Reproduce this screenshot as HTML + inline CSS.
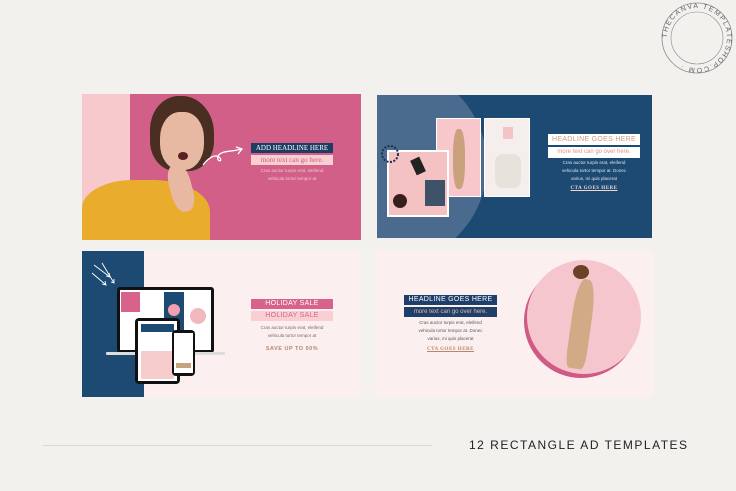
<!DOCTYPE html>
<html><head><meta charset="utf-8"><style>
*{margin:0;padding:0;box-sizing:border-box}
body{width:736px;height:491px;background:#f3f1ee;position:relative;overflow:hidden;font-family:"Liberation Sans",sans-serif}
.a{position:absolute}
.c{text-align:center;white-space:nowrap}
.s{font-size:4.5px;line-height:8px}
</style></head><body>

<svg class="a" style="left:655px;top:0" width="81" height="80" viewBox="0 0 81 80">
<circle cx="42" cy="38" r="35" fill="none" stroke="#8a8a8a" stroke-width="0.8"/>
<circle cx="42" cy="38" r="26" fill="none" stroke="#8a8a8a" stroke-width="0.6"/>
<defs><path id="cp" d="M42,38 m-30,0 a30,30 0 1,1 60,0 a30,30 0 1,1 -60,0"/></defs>
<text font-size="7" fill="#666" letter-spacing="1.5" font-family="Liberation Sans"><textPath href="#cp" startOffset="0">THECANVA TEMPLATESHOP.COM ·</textPath></text>
</svg>

<div class="a" style="left:82px;top:94px;width:279px;height:146px;background:#d15f87;overflow:hidden">
 <div class="a" style="left:0;top:0;width:48px;height:146px;background:#f8c9cc"></div>
 <div class="a" style="left:68px;top:2px;width:64px;height:75px;border-radius:45% 50% 40% 40%;background:#4a2e22"></div>
 <div class="a" style="left:78px;top:18px;width:44px;height:58px;border-radius:45%;background:#e8b9a2"></div>
 <div class="a" style="left:96px;top:58px;width:10px;height:8px;border-radius:50%;background:#5a2020"></div>
 <div class="a" style="left:0;top:86px;width:128px;height:70px;border-radius:40% 45% 0 0;background:#e9ac2c"></div>
 <div class="a" style="left:88px;top:70px;width:22px;height:48px;border-radius:40%;background:#e9b8a2;transform:rotate(-15deg)"></div>
 <svg class="a" style="left:118px;top:52px" width="48" height="22"><path d="M3,19 C10,10 16,8 20,12 C23,16 16,16 18,10 C22,4 32,6 42,3 M36,1 L42,3 L38,8" fill="none" stroke="#fff" stroke-width="1.3"/></svg>
 <div class="a c" style="left:169px;top:49px;width:82px;height:10px;background:#1f3d64;color:#fff;font-family:'Liberation Serif',serif;font-size:7px;line-height:10px">ADD HEADLINE HERE</div>
 <div class="a c" style="left:169px;top:61px;width:82px;height:10px;background:#f9cfd3;color:#c1617d;font-family:'Liberation Serif',serif;font-size:7px;line-height:10px">more text can go here.</div>
 <div class="a c s" style="left:169px;top:73px;width:82px;color:#f5c5d0">Cras auctor turpis erat, eleifend<br>vehicula tortor tempor at</div>
</div>

<div class="a" style="left:377px;top:95px;width:275px;height:143px;background:#1d4a73;overflow:hidden">
 <div class="a" style="left:-90px;top:-30px;width:200px;height:200px;border-radius:50%;background:#4a6b8d"></div>
 <div class="a" style="left:59px;top:23px;width:45px;height:79px;background:#f7c7cc;border:1px solid #fff"><div class="a" style="left:16px;top:10px;width:12px;height:60px;border-radius:40%;background:#c9a27d"></div></div>
 <div class="a" style="left:107px;top:23px;width:46px;height:79px;background:#f4efec;border:1px solid #fff"><div class="a" style="left:10px;top:35px;width:26px;height:34px;border-radius:8px;background:#e6e2dc"></div><div class="a" style="left:18px;top:8px;width:10px;height:12px;background:#f2c4c6"></div></div>
 <div class="a" style="left:10px;top:55px;width:62px;height:67px;background:#f5c2c4;border:2px solid #fff">
  <div class="a" style="left:24px;top:6px;width:10px;height:16px;background:#222;transform:rotate(-25deg)"></div>
  <div class="a" style="left:36px;top:28px;width:20px;height:26px;background:#3d5266"></div>
  <div class="a" style="left:4px;top:42px;width:14px;height:14px;border-radius:50%;background:#3a1e1e"></div>
 </div>
 <svg class="a" style="left:2px;top:48px" width="22" height="22"><circle cx="11" cy="11" r="8" fill="none" stroke="#1d3050" stroke-width="2" stroke-dasharray="2 1.5"/></svg>
 <div class="a c" style="left:171px;top:39px;width:92px;height:11px;background:#fff;color:#d19a88;font-size:7px;line-height:11px;letter-spacing:.3px">HEADLINE GOES HERE</div>
 <div class="a c" style="left:171px;top:52px;width:92px;height:11px;background:#fff;color:#d19a88;font-size:6px;line-height:11px">more text can go over here.</div>
 <div class="a c s" style="left:171px;top:64px;width:92px;color:#dbe3ec">Cras auctor turpis erat, eleifend<br>vehicula tortor tempor at. Donec<br>varius, mi quis placerat</div>
 <div class="a c" style="left:171px;top:91px;width:92px;color:#f0d6cc;font-family:'Liberation Serif',serif;font-size:5px;font-weight:bold;text-decoration:underline;letter-spacing:.5px">CTA GOES HERE</div>
</div>

<div class="a" style="left:82px;top:251px;width:279px;height:146px;background:#fcefef;overflow:hidden">
 <div class="a" style="left:0;top:0;width:62px;height:146px;background:#1d4a73"></div>
 <svg class="a" style="left:8px;top:10px" width="30" height="30"><path d="M4,4 L20,16 M16,15 L20,16 L19,12 M12,2 L24,22 M21,21 L24,22 L24,18 M2,12 L16,24 M12,23 L16,24 L15,20" fill="none" stroke="#fff" stroke-width="0.9"/></svg>
 <div class="a" style="left:35px;top:36px;width:97px;height:66px;background:#111;border-radius:3px"></div>
 <div class="a" style="left:38px;top:39px;width:91px;height:60px;background:#fff">
  <div class="a" style="left:1px;top:2px;width:19px;height:20px;background:#d7628c"></div>
  <div class="a" style="left:44px;top:2px;width:20px;height:38px;background:#1d4a73"></div>
  <div class="a" style="left:48px;top:14px;width:12px;height:12px;border-radius:50%;background:#f2a0b0"></div>
  <div class="a" style="left:70px;top:18px;width:16px;height:16px;border-radius:50%;background:#f2b8c0"></div>
 </div>
 <div class="a" style="left:24px;top:101px;width:119px;height:3px;background:#ddd;border-radius:1px"></div>
 <div class="a" style="left:53px;top:67px;width:45px;height:66px;background:#111;border-radius:4px"></div>
 <div class="a" style="left:56px;top:70px;width:39px;height:60px;background:#fff"><div class="a" style="left:3px;top:3px;width:33px;height:8px;background:#1d4a73"></div><div class="a" style="left:3px;top:30px;width:33px;height:28px;background:#f6cccc"></div></div>
 <div class="a" style="left:90px;top:79px;width:23px;height:46px;background:#111;border-radius:4px"></div>
 <div class="a" style="left:92px;top:82px;width:19px;height:40px;background:#fff"><div class="a" style="left:2px;top:30px;width:15px;height:5px;background:#c9a27d"></div></div>
 <div class="a c" style="left:169px;top:48px;width:82px;height:10px;background:#d7628c;color:#fff;font-size:7px;line-height:10px;letter-spacing:.3px">HOLIDAY SALE</div>
 <div class="a c" style="left:169px;top:60px;width:82px;height:10px;background:#f9cfd3;color:#d7628c;font-size:7px;line-height:10px;letter-spacing:.3px">HOLIDAY SALE</div>
 <div class="a c s" style="left:169px;top:73px;width:82px;color:#7a6a6a">Cras auctor turpis erat, eleifend<br>vehicula tortor tempor at</div>
 <div class="a c" style="left:169px;top:95px;width:82px;color:#b8856d;font-size:5.5px;font-weight:bold;letter-spacing:.5px">SAVE UP TO 50%</div>
</div>

<div class="a" style="left:375px;top:251px;width:279px;height:146px;background:#fcefef;overflow:hidden">
 <div class="a" style="left:149px;top:13px;width:114px;height:114px;border-radius:50%;background:#cf5a86"></div>
 <div class="a" style="left:152px;top:9px;width:114px;height:114px;border-radius:50%;background:#f6c6cf"></div>
 <div class="a" style="left:198px;top:14px;width:16px;height:14px;border-radius:50%;background:#6a4225"></div>
 <div class="a" style="left:196px;top:28px;width:20px;height:90px;border-radius:40% 40% 20% 20%;background:#d2ab86;transform:rotate(8deg)"></div>
 <div class="a c" style="left:29px;top:44px;width:93px;height:10px;background:#1d3f69;color:#fff;font-size:7px;line-height:10px;letter-spacing:.3px">HEADLINE GOES HERE</div>
 <div class="a c" style="left:29px;top:56px;width:93px;height:10px;background:#1d3f69;color:#e5b6a4;font-size:6px;line-height:10px">more text can go over here.</div>
 <div class="a c s" style="left:29px;top:68px;width:93px;color:#5a5a5a">Cras auctor turpis erat, eleifend<br>vehicula tortor tempor at. Donec<br>varius, mi quis placerat</div>
 <div class="a c" style="left:29px;top:96px;width:93px;color:#b8856d;font-family:'Liberation Serif',serif;font-size:5px;font-weight:bold;text-decoration:underline;letter-spacing:.5px">CTA GOES HERE</div>
</div>

<div class="a" style="left:43px;top:445px;width:389px;height:1px;background:#dcd9d5"></div>
<div class="a" style="left:469px;top:438px;color:#222;font-size:12px;letter-spacing:1.5px;white-space:nowrap">12 RECTANGLE AD TEMPLATES</div>
</body></html>
